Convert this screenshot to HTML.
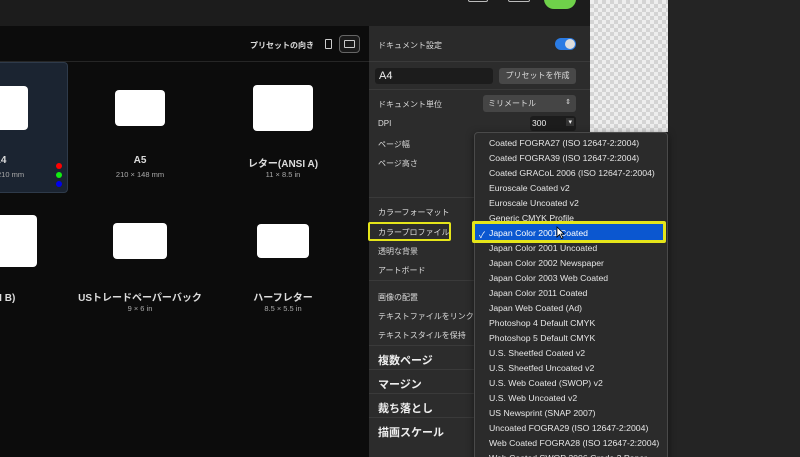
<!DOCTYPE html><html><head><meta charset="utf-8"><style>
*{margin:0;padding:0;box-sizing:border-box}
html,body{width:800px;height:457px;overflow:hidden}
body{background:#242424;font-family:"Liberation Sans","Noto Sans CJK JP",sans-serif;color:#ddd}
#r{position:relative;width:800px;height:457px;overflow:hidden}
.a{position:absolute}
.w{background:#fff;border-radius:4px}
.t{font-size:10px;font-weight:bold;color:#ddd;text-align:center;width:140px}
.s{font-size:7.5px;color:#aaa;text-align:center;width:140px}
.l{font-size:8px;color:#ddd;left:378px}
.h{font-size:11px;font-weight:bold;color:#eee;left:378px}
.sep{left:369px;width:221px;height:1px;background:#3a3a3a}
.it{left:489px;font-size:8.7px;color:#e6e6e6;white-space:nowrap}
</style></head><body><div id="r">
<div class="a" style="left:590px;top:0;width:78px;height:132px;background-color:#eee;background-image:linear-gradient(45deg,#d4d4d4 25%,transparent 25%,transparent 75%,#d4d4d4 75%),linear-gradient(45deg,#d4d4d4 25%,transparent 25%,transparent 75%,#d4d4d4 75%);background-size:8px 8px;background-position:0 0,4px 4px"></div>
<div class="a" style="left:0;top:0;width:590px;height:26px;background:#1c1c1c"></div>
<div class="a" style="left:468px;top:-8px;width:20px;height:10px;border:1.5px solid #bbb;border-radius:2px"></div>
<div class="a" style="left:508px;top:-6px;width:22px;height:8px;border:1.5px solid #bbb;border-radius:2px"></div>
<div class="a" style="left:544px;top:-12px;width:32px;height:21px;background:#6fd14a;border-radius:10px"></div>
<div class="a" style="left:0;top:26px;width:369px;height:431px;background:#0c0c0c"></div>
<div class="a" style="left:0;top:61px;width:369px;height:1px;background:#262626"></div>
<div class="a" style="left:250px;top:40px;font-size:8px;font-weight:bold;color:#ddd">プリセットの向き</div>
<div class="a" style="left:325px;top:39px;width:7px;height:10px;border:1px solid #ccc;border-radius:1px"></div>
<div class="a" style="left:339px;top:35px;width:21px;height:18px;border:1px solid #666;border-radius:4px;background:#1a1a1a"></div>
<div class="a" style="left:344px;top:40px;width:11px;height:8px;border:1px solid #ccc;border-radius:1px"></div>
<div class="a" style="left:-6px;top:62px;width:74px;height:131px;background:#1b2431;border:1px solid #2e3a4a;border-radius:4px"></div>
<div class="a w" style="left:-20px;top:86px;width:48px;height:44px"></div>
<div class="a t" style="left:-70px;top:155px">A4</div>
<div class="a s" style="left:-70px;top:170px">297 × 210 mm</div>
<div class="a" style="left:56px;top:163px;width:6px;height:6px;border-radius:50%;background:#f00"></div>
<div class="a" style="left:56px;top:172px;width:6px;height:6px;border-radius:50%;background:#1e1"></div>
<div class="a" style="left:56px;top:181px;width:6px;height:6px;border-radius:50%;background:#00e"></div>
<div class="a w" style="left:115px;top:90px;width:50px;height:36px"></div>
<div class="a t" style="left:70px;top:155px">A5</div>
<div class="a s" style="left:70px;top:170px">210 × 148 mm</div>
<div class="a w" style="left:253px;top:85px;width:60px;height:46px"></div>
<div class="a t" style="left:213px;top:155px">レター(ANSI A)</div>
<div class="a s" style="left:213px;top:170px">11 × 8.5 in</div>
<div class="a w" style="left:-20px;top:215px;width:57px;height:52px"></div>
<div class="a t" style="left:-100px;top:289px">タブロイド(ANSI B)</div>
<div class="a s" style="left:-100px;top:304px">17 × 11 in</div>
<div class="a w" style="left:113px;top:223px;width:54px;height:36px"></div>
<div class="a t" style="left:70px;top:289px">USトレードペーパーバック</div>
<div class="a s" style="left:70px;top:304px">9 × 6 in</div>
<div class="a w" style="left:257px;top:224px;width:52px;height:34px"></div>
<div class="a t" style="left:213px;top:289px">ハーフレター</div>
<div class="a s" style="left:213px;top:304px">8.5 × 5.5 in</div>
<div class="a" style="left:369px;top:26px;width:221px;height:431px;background:#2c2c2c"></div>
<div class="a" style="left:369px;top:26px;width:221px;height:35px;background:#2a2a2a"></div>
<div class="a l" style="top:40px">ドキュメント設定</div>
<div class="a" style="left:555px;top:38px;width:21px;height:12px;border-radius:6px;background:#2a7be4"></div>
<div class="a" style="left:565px;top:39px;width:10px;height:10px;border-radius:50%;background:#ddd"></div>
<div class="a sep" style="top:61px"></div>
<div class="a" style="left:375px;top:68px;width:118px;height:16px;background:#1c1c1c;border-radius:3px;font-size:11px;color:#eee;padding:2px 4px">A4</div>
<div class="a" style="left:499px;top:68px;width:77px;height:16px;background:#484848;border-radius:3px;font-size:8px;color:#ddd;text-align:center;line-height:16px">プリセットを作成</div>
<div class="a sep" style="top:89px"></div>
<div class="a l" style="top:99px">ドキュメント単位</div>
<div class="a" style="left:483px;top:95px;width:93px;height:17px;background:#454545;border-radius:3px;font-size:8px;color:#ddd;padding:3px 5px">ミリメートル<span style="float:right;font-size:7px">⇕</span></div>
<div class="a l" style="top:119px">DPI</div>
<div class="a" style="left:530px;top:116px;width:46px;height:15px;background:#1c1c1c;border-radius:3px;font-size:8.5px;color:#eee;padding:2px 2px">300<span style="float:right;background:#333;padding:0 2px;font-size:7px">▾</span></div>
<div class="a l" style="top:139px">ページ幅</div>
<div class="a l" style="top:158px">ページ高さ</div>
<div class="a sep" style="top:197px"></div>
<div class="a l" style="top:207px">カラーフォーマット</div>
<div class="a" style="left:368px;top:222px;width:83px;height:19px;border:2px solid #e5e51a;border-radius:2px"></div>
<div class="a l" style="top:227px">カラープロファイル</div>
<div class="a l" style="top:246px">透明な背景</div>
<div class="a l" style="top:265px">アートボード</div>
<div class="a sep" style="top:280px"></div>
<div class="a l" style="top:292px">画像の配置</div>
<div class="a l" style="top:311px">テキストファイルをリンクと</div>
<div class="a l" style="top:330px">テキストスタイルを保持</div>
<div class="a sep" style="top:345px"></div>
<div class="a h" style="top:352px">複数ページ</div>
<div class="a sep" style="top:369px"></div>
<div class="a h" style="top:376px">マージン</div>
<div class="a sep" style="top:393px"></div>
<div class="a h" style="top:400px">裁ち落とし</div>
<div class="a sep" style="top:417px"></div>
<div class="a h" style="top:424px">描画スケール</div>
<div class="a" style="left:474px;top:132px;width:194px;height:330px;background:#2b2b2b;border:1px solid #4a4a4a;border-radius:4px;box-shadow:0 2px 8px rgba(0,0,0,.5)"></div>
<div class="a" style="left:472px;top:221px;width:194px;height:22px;border:2px solid #e5e51a;border-radius:2px;background:#e5e51a"></div>
<div class="a" style="left:475px;top:224px;width:188px;height:16px;background:#0b57d0"></div>
<div class="a it" style="top:138px">Coated FOGRA27 (ISO 12647-2:2004)</div>
<div class="a it" style="top:153px">Coated FOGRA39 (ISO 12647-2:2004)</div>
<div class="a it" style="top:168px">Coated GRACoL 2006 (ISO 12647-2:2004)</div>
<div class="a it" style="top:183px">Euroscale Coated v2</div>
<div class="a it" style="top:198px">Euroscale Uncoated v2</div>
<div class="a it" style="top:213px">Generic CMYK Profile</div>
<div class="a it" style="top:228px;color:#fff"><span style="position:absolute;left:-10px">✓</span>Japan Color 2001 Coated</div>
<div class="a it" style="top:243px">Japan Color 2001 Uncoated</div>
<div class="a it" style="top:258px">Japan Color 2002 Newspaper</div>
<div class="a it" style="top:273px">Japan Color 2003 Web Coated</div>
<div class="a it" style="top:288px">Japan Color 2011 Coated</div>
<div class="a it" style="top:303px">Japan Web Coated (Ad)</div>
<div class="a it" style="top:318px">Photoshop 4 Default CMYK</div>
<div class="a it" style="top:333px">Photoshop 5 Default CMYK</div>
<div class="a it" style="top:348px">U.S. Sheetfed Coated v2</div>
<div class="a it" style="top:363px">U.S. Sheetfed Uncoated v2</div>
<div class="a it" style="top:378px">U.S. Web Coated (SWOP) v2</div>
<div class="a it" style="top:393px">U.S. Web Uncoated v2</div>
<div class="a it" style="top:408px">US Newsprint (SNAP 2007)</div>
<div class="a it" style="top:423px">Uncoated FOGRA29 (ISO 12647-2:2004)</div>
<div class="a it" style="top:438px">Web Coated FOGRA28 (ISO 12647-2:2004)</div>
<div class="a it" style="top:453px">Web Coated SWOP 2006 Grade 3 Paper</div>
<svg class="a" style="left:556px;top:226px" width="9" height="13" viewBox="0 0 9 13"><path d="M1 1 L1 11 L3.5 8.5 L5.5 12.5 L7 11.8 L5 8 L8 8 Z" fill="#fff" stroke="#000" stroke-width=".8"/></svg>
</div></body></html>
